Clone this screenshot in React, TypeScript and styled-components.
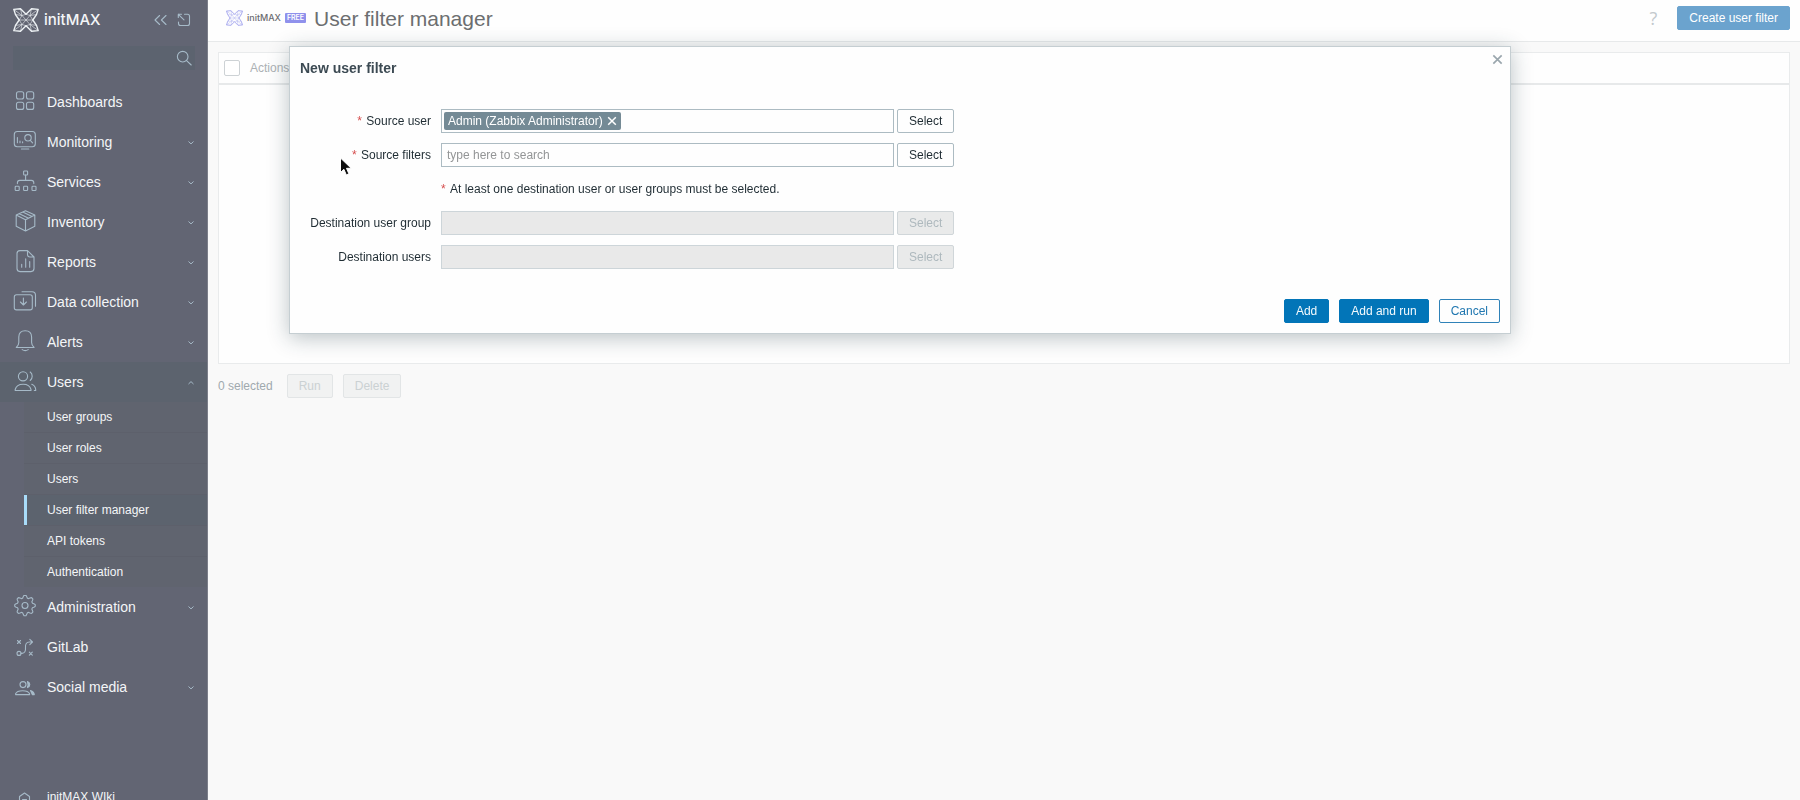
import React from "react";
import styled, { createGlobalStyle, css } from "styled-components";

const GlobalStyle = createGlobalStyle`
  *, *::before, *::after { box-sizing: border-box; }
  body {
    margin: 0;
    background: #f9f9f9;
    color: #1f2c33;
    font-family: "Liberation Sans", Arial, sans-serif;
    font-size: 12px;
    line-height: 16px;
  }
  button, input { font: inherit; }
`;

const Page = styled.div`
  display: flex;
  height: 100vh;
  overflow: hidden;
`;

/* ---------- sidebar ---------- */

const Sidebar = styled.aside`
  flex: none;
  display: flex;
  flex-direction: column;
  width: 208px;
  overflow: hidden;
  background: #626573;
  border-right: 1px solid #7c7f8a;
`;

const SidebarHeader = styled.header`
  flex: none;
  display: flex;
  align-items: center;
  height: 40px;
  padding: 0 15px 0 13px;
`;

const Brand = styled.a`
  display: flex;
  align-items: center;
  gap: 5px;
  margin-right: auto;
  color: #f4f6f8;
  font: 500 15px/20px Inter, sans-serif;
  text-decoration: none;
`;

const IconButton = styled.button`
  display: flex;
  padding: 0;
  border: 0;
  background: none;
  color: #a6bac8;
  & + & { margin-left: 8px; }
`;

const SearchBox = styled.form`
  flex: none;
  display: flex;
  align-items: center;
  height: 24px;
  margin: 6px 12px 12px 13px;
  padding-right: 3px;
  background: #5c636f;
`;

const SearchInput = styled.input`
  flex: 1;
  min-width: 0;
  height: 24px;
  padding: 0 6px;
  border: 0;
  outline: 0;
  background: none;
  color: #f4f6f8;
`;

const Menu = styled.ul`
  flex: none;
  margin: 0;
  padding: 0;
  list-style: none;
`;

const BottomMenu = styled(Menu)`
  padding-top: 70px;
`;

const MenuLink = styled.a<{ $open?: boolean; $small?: boolean }>`
  display: flex;
  align-items: center;
  gap: 10px;
  height: 40px;
  padding: 0 12px 0 13px;
  background: ${(p) => (p.$open ? "#5c636e" : "transparent")};
  color: #f4f6f8;
  font-size: ${(p) => (p.$small ? "12px" : "14px")};
  text-decoration: none;
  svg { flex: none; color: #a6bac8; }
`;

const MenuText = styled.span`
  flex: 1;
`;

const SubMenu = styled.ul`
  margin: 0 0 0 24px;
  padding: 0;
  list-style: none;
  background: #60646f;
`;

const SubLink = styled.a<{ $active?: boolean }>`
  display: block;
  height: 30px;
  padding-left: ${(p) => (p.$active ? "20px" : "23px")};
  border-left: ${(p) => (p.$active ? "3px solid #a9dcf9" : "0")};
  background: ${(p) => (p.$active ? "#5c636e" : "transparent")};
  color: #f4f6f8;
  line-height: 30px;
  text-decoration: none;
`;

const SubItem = styled.li`
  & + & { border-top: 1px solid #5d606b; }
`;

/* ---------- main area ---------- */

const Main = styled.main`
  flex: 1;
  min-width: 0;
`;

const TopBar = styled.header`
  display: flex;
  align-items: center;
  height: 42px;
  padding: 0 10px 5px 18px;
  background: #fefefe;
  border-bottom: 1px solid #e7e9ea;
`;

const ModuleBrand = styled.span`
  display: flex;
  align-items: center;
  gap: 4px;
  color: #6c6c70;
  font: 500 9px/12px Inter, sans-serif;
`;

const FreeBadge = styled.span`
  padding: 0 2px;
  border-radius: 1px;
  background: #8f91ec;
  color: #fff;
  font: 600 7px/10px Inter, sans-serif;
`;

const Title = styled.h1`
  flex: 1;
  margin: 0 0 0 8px;
  padding-top: 2px;
  color: #6c6e70;
  font-size: 21px;
  font-weight: 400;
  line-height: 24px;
`;

const HelpLink = styled.a`
  margin-right: 20px;
  color: #c3c9cd;
  font: 18px/24px "Open Sans", sans-serif;
  text-decoration: none;
`;

const Button = styled.button<{ $kind?: "primary" | "outline" | "soft" }>`
  flex: none;
  height: 24px;
  padding: 0 11px;
  border: 1px solid #acbbc2;
  border-radius: 2px;
  background: #fefefe;
  color: #1f2c33;
  line-height: 20px;
  ${(p) => p.$kind === "primary" && css`
    background: #0275b8; border-color: #0275b8; color: #f4fafd;`}
  ${(p) => p.$kind === "outline" && css`
    border-color: #2f82b8; color: #2077b0;`}
  ${(p) => p.$kind === "soft" && css`
    background: #6ba3ce; border-color: #6ba3ce; color: #fff;`}
  &:disabled { background: #e9eaea; border-color: #d0d6d9; color: #aeb9be; }
`;

const FadedButton = styled(Button)`
  &:disabled { background: #f1f2f2; border-color: #e2e5e6; color: #cbd1d3; }
`;

const Content = styled.div`
  padding: 10px;
`;

const TableFrame = styled.div`
  min-height: 312px;
  border: 1px solid #e9ebec;
  background: #fefefe;
`;

const ListTable = styled.table`
  width: 100%;
  border-collapse: collapse;
  th {
    height: 31px;
    padding: 0;
    border-bottom: 2px solid #e7e9ea;
    color: #acb1b4;
    font-weight: 400;
    text-align: left;
  }
`;

const CheckCell = styled.th`
  width: 31px;
`;

const Check = styled.input`
  display: block;
  appearance: none;
  width: 16px;
  height: 16px;
  margin: 0 0 0 5px;
  border: 1px solid #cdd2d5;
  border-radius: 2px;
  background: #fff;
`;

const ActionBar = styled.div`
  display: flex;
  align-items: center;
  gap: 10px;
  padding-top: 10px;
  color: #a0a9ae;
`;

const SelectedCount = styled.span`
  margin-right: 4px;
`;

/* ---------- dialog ---------- */

const Overlay = styled.div`
  position: fixed;
  inset: 0;
  padding: 46px 289px;
`;

const Dialog = styled.section`
  position: relative;
  padding: 10px;
  border: 1px solid #c5ced2;
  background: #fefefe;
  box-shadow: 0 4px 20px rgba(30, 55, 65, 0.3);
`;

const DialogTitle = styled.h2`
  margin: 0;
  color: #3c4a53;
  font-size: 14px;
  line-height: 22px;
`;

const CloseButton = styled.button`
  position: absolute;
  top: 6px;
  right: 6px;
  display: flex;
  padding: 1px;
  border: 0;
  background: none;
  color: #9aa6ad;
`;

const FormGrid = styled.form`
  display: grid;
  grid-template-columns: 131px 1fr;
  gap: 10px;
  padding: 30px 0;
`;

const Label = styled.label`
  text-align: right;
  line-height: 24px;
`;

const Star = styled.span`
  margin-right: 1px;
  color: #d64e4e;
  &::after { content: " "; white-space: pre; }
`;

const Field = styled.div`
  display: flex;
  gap: 3px;
  line-height: 24px;
`;

const MultiSelect = styled.div<{ $disabled?: boolean }>`
  display: flex;
  align-items: center;
  width: 453px;
  height: 24px;
  padding: 0 2px;
  border: 1px solid ${(p) => (p.$disabled ? "#cdd5d9" : "#acbbc2")};
  background: ${(p) => (p.$disabled ? "#e9e9e9" : "#fefefe")};
`;

const FieldInput = styled.input`
  flex: 1;
  min-width: 0;
  height: 20px;
  padding: 0 3px;
  border: 0;
  outline: 0;
  background: none;
  &::placeholder { color: #939596; opacity: 1; }
`;

const Chip = styled.span`
  display: flex;
  align-items: center;
  gap: 4px;
  height: 18px;
  padding: 0 4px;
  border-radius: 2px;
  background: #748a95;
  color: #fff;
  line-height: 18px;
`;

const ChipRemove = styled.button`
  display: flex;
  padding: 0;
  border: 0;
  background: none;
  color: inherit;
`;

const DialogFooter = styled.footer`
  display: flex;
  justify-content: flex-end;
  gap: 10px;
`;

const Pointer = styled.svg`
  position: fixed;
  left: 338px;
  top: 156px;
  pointer-events: none;
`;

/* ---------- icons ---------- */

const Icon = ({ children, size = 24 }: { children: React.ReactNode; size?: number }) => (
  <svg width={size} height={size} viewBox={`0 0 ${size} ${size}`} fill="none" stroke="currentColor"
    strokeWidth="1.1" strokeLinecap="round" strokeLinejoin="round" aria-hidden="true">
    {children}
  </svg>
);

const gear = Array.from({ length: 64 }, (_, i) => {
  const a = (i / 64) * Math.PI * 2;
  const w = Math.cos(a * 8 - Math.PI);
  const r = 9 - 1.4 * Math.tanh(w * 1.8);
  return `${(12 + r * Math.sin(a)).toFixed(2)} ${(10.5 + r * Math.cos(a)).toFixed(2)}`;
}).join("L");

const icons: Record<string, React.ReactNode> = {
  dashboards: <>{[3.5, 13.5].flatMap((x) => [1.8, 12.2].map((y) =>
    <rect key={`${x}-${y}`} x={x} y={y} width="7.2" height="7.2" rx="2" />))}</>,
  monitoring: <><rect x="1.3" y="1.5" width="21" height="15.3" rx="3" />
    <path d="M8.4 19h7.4M4.4 7.6v5.2M7 11v1.8M9.6 11.8v1M17.3 10.4l2.3 2.4" /><circle cx="15" cy="7.8" r="3.2" /></>,
  services: <><rect x="10.6" y="1" width="4" height="4" rx="0.8" />
    <path d="M12.6 5v5.4M4.4 13.6v-.8q0-2.4 2.4-2.4h11.6q2.4 0 2.4 2.4v.8" />
    {[2.2, 10.6, 19].map((x) => <rect key={x} x={x} y="16.3" width="4" height="4.2" rx="0.8" />)}</>,
  inventory: <path d="M12.5.8 21.8 5v11.2l-9.3 4.8-9.3-4.8V5ZM3.2 5l9.3 4.8L21.8 5M12.5 9.8V21M9.8 2.1l9.2 4.4M6.3 3.700l9.300 4.500" />,
  reports: <path d="M14.5.6H7q-3 0-3 3v15q0 3 3 3h11q3 0 3-3V7ZM14.5.6V4.5q0 2.5 2.5 2.5h4M8.7 14.2v3M12.700 8.700v8.500M16.700 11.500v5.700" />,
  data: <><rect x="1.3" y="4.7" width="18" height="15.2" rx="2.2" />
    <path d="M9 1.7h10q3.5 0 3.5 3.500v11M10.400 8v7M7.400 12l3 3 3-3" /></>,
  alerts: <path d="M3.300 17.500q2.500-2.300 2.500-5V7q0-6.300 6.400-6.300T18.600 7v5.500q0 2.700 2.500 5ZM9.200 19.600q3 2 6 0" />,
  users: <><circle cx="10" cy="6.300" r="4.600" />
    <path d="M2.200 20.500v-1q1.300-5.300 7.900-5.300t7.900 5.300v1ZM17.200 2q2 1.500 2 4.200t-2 4.300M18.800 14.300q3.500 1.500 3.900 5.200v1h-1.400" /></>,
  admin: <><path d={`M${gear}Z`} /><circle cx="12" cy="10.500" r="3" /></>,
  gitlab: <><path d="M4.500 5.500l3 3M7.500 5.500l-3 3M16.300 17.200l3 3M19.300 17.200l-3 3M8 18.400h1q4-.3 3.500-5.800T16.500 7h3M16.800 4.300 19.500 7l-2.700 2.700" />
    <circle cx="6" cy="18.400" r="2" /></>,
  social: <><circle cx="10" cy="9.600" r="3" /><path d="M2.600 19.600v-.8q1.200-3 7-3t7 3v.8Z" />
    <path d="M14.500 6.600q2.300 1 2.300 3t-2.300 3q1-3 0-6ZM17.500 15.600q3.500 1 3.800 4h-2Z" fill="currentColor" /></>,
  home: <path d="M6.500 19V11.500L11.500 8l5 3.500V19ZM9.500 14.500h4" />,
};

const InitMark = ({ width, height, color }: { width: number; height: number; color: string }) => (
  <svg width={width} height={height} viewBox="0 0 26 24" fill="none" stroke={color}
    strokeLinejoin="round" aria-hidden="true">
    <path d="M.8 1.400 7.500.8 13 6.300 18.500.8l6.700.6-1.700 5.200L19.800 12l3.700 5.400 1.700 5.200-6.700.6L13 17.700l-5.500 5.500-6.700-.6 1.700-5.200L6.200 12 2.500 6.600Z" strokeWidth="1.400" />
    <path d="M.8 1.400 9 7.500l4 4.500 4-4.500 8.200-6.100M.8 22.600 9 16.500l4-4.500 4 4.500 8.200 6.100M7.500.8 9 7.500l-6.500-.9M18.500.8 17 7.500l6.500-.9M7.500 23.200 9 16.500l-6.500.9M18.500 23.200 17 16.500l6.500.9M6.200 12 9 7.500l4-1.200 4 1.200 2.800 4.500-2.800 4.500-4 1.200-4-1.200ZM6.200 12h13.600" strokeWidth="0.600" />
  </svg>
);

const Chevron = ({ up }: { up?: boolean }) => (
  <svg width="8" height="8" viewBox="0 0 8 8" fill="none" stroke="currentColor" strokeWidth="1" aria-hidden="true">
    <path d={up ? "M1.500 6 4 3.600 6.500 6" : "M1.500 3.500 4 5.900l2.500-2.400"} />
  </svg>
);

const Cross = ({ size }: { size: number }) => (
  <svg width={size} height={size} viewBox="0 0 10 10" stroke="currentColor" strokeWidth="1.500" aria-hidden="true">
    <path d="M1.200 1.200l7.600 7.600M8.800 1.200 1.200 8.800" />
  </svg>
);

/* ---------- data ---------- */

const sections = [
  { name: "Dashboards", icon: "dashboards", plain: true },
  { name: "Monitoring", icon: "monitoring" },
  { name: "Services", icon: "services" },
  { name: "Inventory", icon: "inventory" },
  { name: "Reports", icon: "reports" },
  { name: "Data collection", icon: "data" },
  { name: "Alerts", icon: "alerts" },
  {
    name: "Users", icon: "users",
    pages: ["User groups", "User roles", "Users", "User filter manager", "API tokens", "Authentication"],
  },
  { name: "Administration", icon: "admin" },
  { name: "GitLab", icon: "gitlab", plain: true },
  { name: "Social media", icon: "social" },
];

const currentPage = "User filter manager";

const fields = [
  { id: "source-user", label: "Source user", required: true, chip: "Admin (Zabbix Administrator)" },
  { id: "source-filters", label: "Source filters", required: true, placeholder: "type here to search" },
  { id: "destination-group", label: "Destination user group", disabled: true },
  { id: "destination-users", label: "Destination users", disabled: true },
];

const FieldRow = ({ field }: { field: (typeof fields)[number] }) => (
  <>
    <Label htmlFor={field.id}>
      {field.required && <Star>*</Star>}
      {field.label}
    </Label>
    <Field>
      <MultiSelect $disabled={field.disabled}>
        {field.chip && (
          <Chip>
            {field.chip}
            <ChipRemove type="button" aria-label="Remove"><Cross size={10} /></ChipRemove>
          </Chip>
        )}
        <FieldInput id={field.id} placeholder={field.placeholder} disabled={field.disabled} />
      </MultiSelect>
      <Button type="button" disabled={field.disabled}>Select</Button>
    </Field>
  </>
);

export default function App() {
  return (
    <>
      <GlobalStyle />
      <Page>
        <Sidebar>
          <SidebarHeader>
            <Brand href="#">
              <InitMark width={26} height={24} color="#eef2f5" />
              initMAX
            </Brand>
            <IconButton aria-label="Collapse sidebar">
              <Icon size={16}><path d="M7.600 3.500 3 8l4.600 4.500M14 3.500 9.400 8l4.600 4.500" /></Icon>
            </IconButton>
            <IconButton aria-label="Hide sidebar">
              <Icon size={16}><path d="M8.500 2.300h3q2 0 2 2v7.200q0 2-2 2h-7q-2 0-2-2v-1.500M8 7.800 2.300 2.300M2.300 5.500V2.300h3.200" /></Icon>
            </IconButton>
          </SidebarHeader>
          <SearchBox>
            <SearchInput type="search" aria-label="Search" />
            <IconButton type="submit" aria-label="Search">
              <Icon size={16}><circle cx="6.700" cy="6.700" r="5.300" /><path d="m10.600 10.600 4.600 4.400" /></Icon>
            </IconButton>
          </SearchBox>
          <nav>
            <Menu>
              {sections.map((s) => (
                <li key={s.name}>
                  <MenuLink href="#" $open={!!s.pages}>
                    <Icon>{icons[s.icon]}</Icon>
                    <MenuText>{s.name}</MenuText>
                    {!s.plain && <Chevron up={!!s.pages} />}
                  </MenuLink>
                  {s.pages && (
                    <SubMenu>
                      {s.pages.map((page) => (
                        <SubItem key={page}>
                          <SubLink href="#" $active={page === currentPage}>{page}</SubLink>
                        </SubItem>
                      ))}
                    </SubMenu>
                  )}
                </li>
              ))}
            </Menu>
            <BottomMenu>
              <li>
                <MenuLink href="#" $small>
                  <Icon>{icons.home}</Icon>
                  <MenuText>initMAX WIki</MenuText>
                </MenuLink>
              </li>
            </BottomMenu>
          </nav>
        </Sidebar>

        <Main>
          <TopBar>
            <ModuleBrand>
              <InitMark width={17} height={16} color="#a3a4ee" />
              initMAX
              <FreeBadge>FREE</FreeBadge>
            </ModuleBrand>
            <Title>User filter manager</Title>
            <HelpLink href="#" aria-label="Help">?</HelpLink>
            <Button $kind="soft">Create user filter</Button>
          </TopBar>
          <Content>
            <TableFrame>
              <ListTable>
                <thead>
                  <tr>
                    <CheckCell><Check type="checkbox" aria-label="Select all" /></CheckCell>
                    <th>Actions</th>
                  </tr>
                </thead>
              </ListTable>
            </TableFrame>
            <ActionBar>
              <SelectedCount>0 selected</SelectedCount>
              <FadedButton disabled>Run</FadedButton>
              <FadedButton disabled>Delete</FadedButton>
            </ActionBar>
          </Content>
        </Main>
      </Page>

      <Overlay>
        <Dialog role="dialog" aria-labelledby="dialog-title">
          <DialogTitle id="dialog-title">New user filter</DialogTitle>
          <CloseButton aria-label="Close"><Cross size={11} /></CloseButton>
          <FormGrid>
            {fields.slice(0, 2).map((f) => <FieldRow key={f.id} field={f} />)}
            <span />
            <Field>
              <span><Star>*</Star>At least one destination user or user groups must be selected.</span>
            </Field>
            {fields.slice(2).map((f) => <FieldRow key={f.id} field={f} />)}
          </FormGrid>
          <DialogFooter>
            <Button $kind="primary">Add</Button>
            <Button $kind="primary">Add and run</Button>
            <Button $kind="outline">Cancel</Button>
          </DialogFooter>
        </Dialog>
      </Overlay>

      <Pointer width="16" height="22" viewBox="0 0 16 22" aria-hidden="true">
        <path d="M2.500 2v14.500l3.400-3.200 2.400 5.600 2.600-1.100-2.400-5.500h4.700Z" fill="#0c0c0c" stroke="#fff" strokeWidth="1" />
      </Pointer>
    </>
  );
}
